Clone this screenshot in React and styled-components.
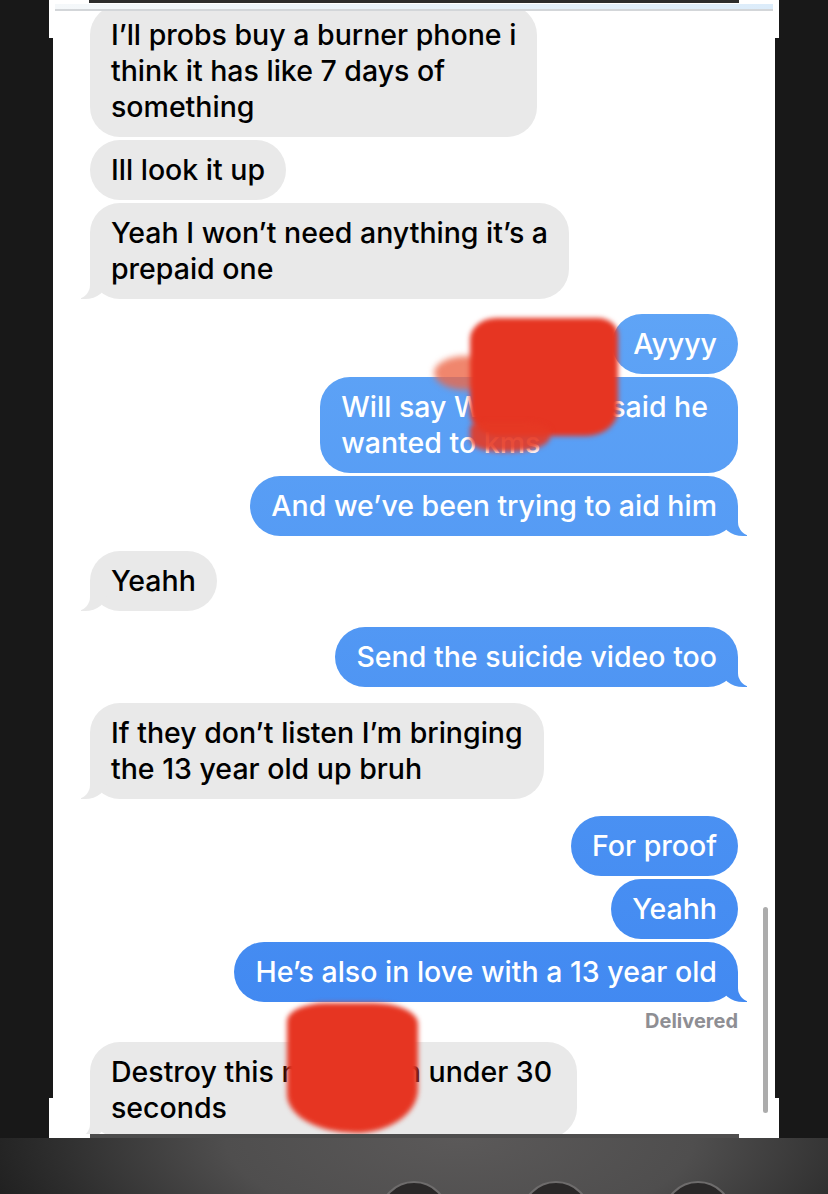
import styled, { createGlobalStyle, css } from "styled-components";

const Global = createGlobalStyle`
  html, body {
    margin: 0;
    padding: 0;
    background: #181818;
  }
  body {
    width: 828px;
    height: 1194px;
    overflow: hidden;
    font-family: Inter, "Noto Sans", "Liberation Sans", sans-serif;
  }
`;

const Screen = styled.div`
  width: 828px;
  height: 1194px;
  display: flex;
  flex-direction: column;
  background: #181818;
`;

const Panel = styled.div`
  position: relative;
  flex: none;
  width: 730px;
  height: 1138px;
  margin-left: 49px;
  display: flex;
  flex-direction: column;
  background:
    linear-gradient(to right, #181818 4px, transparent 4px, transparent 726px, #181818 726px) 0 38px / 100% 1060px no-repeat,
    #ffffff;
`;

const TopEdge = styled.div`
  flex: none;
  height: 3px;
  margin: 0 40px;
  background: #2c2c2c;
`;

const NavStrip = styled.div`
  flex: none;
  height: 5px;
  margin: 1px 6px 0;
  background: linear-gradient(to right, #f5f8fa, #dcecfa);
  border-bottom: 2px solid #d3d6d9;
  position: relative;
  z-index: 3;
`;

const Thread = styled.div`
  flex: 1;
  min-height: 0;
  overflow: hidden;
  display: flex;
  flex-direction: column;
  padding: 0 41px;
`;

const tailSent = css`
  &::before {
    content: "";
    position: absolute;
    bottom: 0;
    right: -9px;
    width: 26px;
    height: 30px;
    background: inherit;
    border-bottom-left-radius: 22px 18px;
  }
  &::after {
    content: "";
    position: absolute;
    bottom: 0;
    right: -34px;
    width: 34px;
    height: 30px;
    background: #ffffff;
    border-bottom-left-radius: 14px;
  }
`;

const tailReceived = css`
  &::before {
    content: "";
    position: absolute;
    bottom: 0;
    left: -9px;
    width: 26px;
    height: 30px;
    background: inherit;
    border-bottom-right-radius: 22px 18px;
  }
  &::after {
    content: "";
    position: absolute;
    bottom: 0;
    left: -34px;
    width: 34px;
    height: 30px;
    background: #ffffff;
    border-bottom-right-radius: 14px;
  }
`;

const Bubble = styled.div`
  position: relative;
  flex: none;
  align-self: ${(p) => (p.$sent ? "flex-end" : "flex-start")};
  margin-top: ${(p) => p.$gap ?? 3}px;
  padding: 12px 21px;
  border-radius: 30px;
  font-size: 28.5px;
  font-weight: 500;
  line-height: 36px;
  white-space: pre;
  color: ${(p) => (p.$sent ? "#ffffff" : "#000000")};
  background: ${(p) =>
    p.$sent
      ? "linear-gradient(180deg, #6cb0f8 0px, #3a82f0 1194px) fixed"
      : "#e9e9e9"};
  ${(p) => p.$tail && (p.$sent ? tailSent : tailReceived)}
`;

const Hidden = styled.span`
  display: inline-block;
  width: ${(p) => p.$w}px;
`;

const Smudge = styled.span`
  position: absolute;
  z-index: 2;
  ${(p) => (p.$fromRight ? `right: ${p.$x}px;` : `left: ${p.$x}px;`)}
  top: ${(p) => p.$y}px;
  width: ${(p) => p.$w}px;
  height: ${(p) => p.$h}px;
  background: ${(p) => p.$tone || "#e63522"};
  border-radius: ${(p) => p.$r || "30%"};
  filter: blur(${(p) => p.$blur ?? 2.5}px);
`;

const Status = styled.div`
  flex: none;
  align-self: flex-end;
  margin: 8px 0 10px;
  font-size: 20px;
  line-height: 22px;
  font-weight: 700;
  color: #8e8e93;
`;

const ScrollThumb = styled.div`
  position: absolute;
  left: 714px;
  top: 907px;
  width: 5px;
  height: 206px;
  border-radius: 3px;
  background: #acacac;
`;

const BottomLip = styled.div`
  flex: none;
  height: 4px;
  background: linear-gradient(to right, #ffffff 41px, #4c4c4c 41px, #4f4e4e 690px, #ffffff 690px);
`;

const Dock = styled.div`
  flex: 1;
  overflow: hidden;
  display: flex;
  gap: 72px;
  padding: 43px 0 0 379px;
  background: radial-gradient(ellipse 520px 200px at 460px 0px, #5b5959 0%, #4f4e4e 45%, #2c2c2c 80%, #1a1a1a 100%);
`;

const DockButton = styled.div`
  flex: none;
  width: 66px;
  height: 66px;
  border-radius: 50%;
  background: #2a2828;
  border: 2px solid #6e6c6c;
`;

export default function App() {
  return (
    <Screen>
      <Global />
      <Panel>
        <TopEdge />
        <NavStrip />
        <Thread>
          <Bubble $gap={-6}>{"I’ll probs buy a burner phone i\nthink it has like 7 days of\nsomething"}</Bubble>
          <Bubble>Ill look it up</Bubble>
          <Bubble $tail>{"Yeah I won’t need anything it’s a\nprepaid one"}</Bubble>

          <Bubble $sent $gap={15}>Ayyyy</Bubble>
          <Bubble $sent>
            Will say W<Hidden $w={120} /> said he<Hidden $w={9} />{"\n"}wanted to kms
            <Smudge $fromRight $x={240} $y={-21} $w={64} $h={34} $tone="rgba(236, 104, 72, 0.8)" $r="50%" $blur={3} />
            <Smudge $fromRight $x={120} $y={-59} $w={148} $h={118} $r="18% 14% 22% 20%" />
            <Smudge $fromRight $x={188} $y={45} $w={80} $h={30} $tone="rgba(230, 56, 36, 0.9)" $r="20% 30% 50% 40%" />
          </Bubble>
          <Bubble $sent $tail>And we’ve been trying to aid him</Bubble>

          <Bubble $gap={15} $tail>Yeahh</Bubble>
          <Bubble $sent $gap={16} $tail>Send the suicide video too</Bubble>
          <Bubble $gap={16} $tail>{"If they don’t listen I’m bringing\nthe 13 year old up bruh"}</Bubble>

          <Bubble $sent $gap={17}>For proof</Bubble>
          <Bubble $sent>Yeahh</Bubble>
          <Bubble $sent $tail>He’s also in love with a 13 year old</Bubble>
          <Status>Delivered</Status>

          <Bubble $gap={0} $tail>
            Destroy this m<Hidden $w={97} />n under 30<Hidden $w={4} />{"\n"}seconds
            <Smudge $x={197} $y={-39} $w={131} $h={130} $r="30% 34% 48% 52% / 14% 16% 34% 30%" />
          </Bubble>
        </Thread>
        <BottomLip />
        <ScrollThumb />
      </Panel>
      <Dock>
        <DockButton />
        <DockButton />
        <DockButton />
      </Dock>
    </Screen>
  );
}
